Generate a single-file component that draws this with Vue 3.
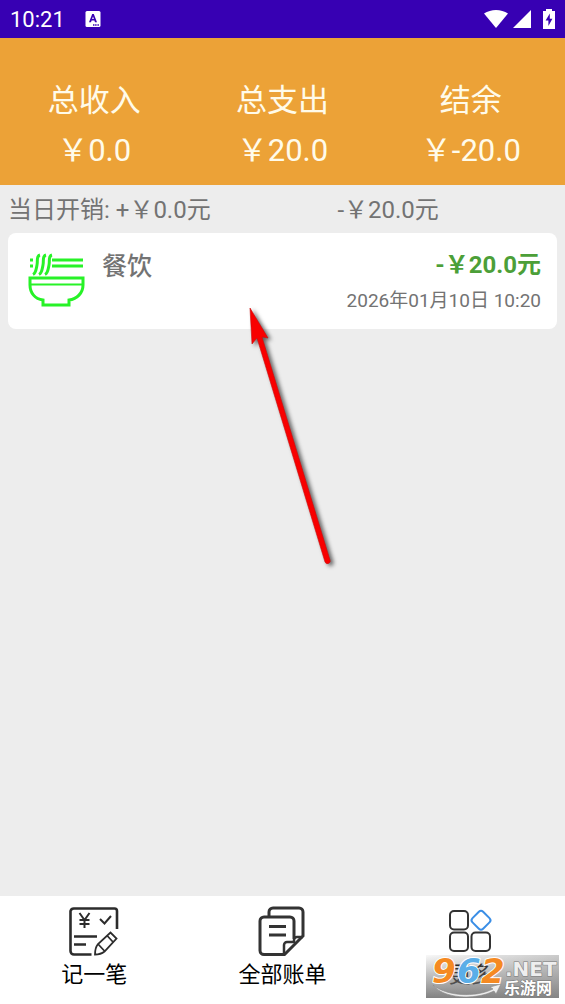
<script setup>
const yuan = '\uFFE5'

const totals = [
  { label: '总收入', value: `${yuan}0.0` },
  { label: '总支出', value: `${yuan}20.0` },
  { label: '结余', value: `${yuan}-20.0` },
]

const records = [
  { id: 1, category: '餐饮', amount: `-${yuan}20.0元`, time: '2026年01月10日 10:20' },
]
</script>

<template>
  <div class="app">
    <header class="status">
      <span class="clock">10:21</span>
      <svg class="badge-icon" width="16" height="18" viewBox="0 0 16 18" aria-hidden="true">
        <rect x="0.5" y="1" width="15" height="16" rx="1.5" fill="#fff" />
        <path d="M4 12.3 7.2 4h1.6L12 12.3h-2L9.4 10.6H6.6L6 12.3zM7.1 9h1.8L8 6.4z" fill="#3700b3" />
        <path d="M8 15h6" stroke="#3700b3" stroke-width="1.4" stroke-dasharray="1.2 .5" />
      </svg>
      <div class="signals">
        <svg width="26" height="20" viewBox="0 0 26 20" aria-hidden="true">
          <path d="M1 4.6C8-.2 18-.2 25 4.6L13 19z" fill="#fff" />
        </svg>
        <svg width="18" height="20" viewBox="0 0 18 20" aria-hidden="true">
          <path d="M0 19 18 1v18z" fill="#fff" />
        </svg>
        <svg class="battery" width="12" height="20" viewBox="0 0 12 20" aria-hidden="true">
          <path d="M3 0h6v2h3v18H0V2h3z" fill="#fff" />
          <path d="M6.8 4.5 2.6 11.4h2.8v5.6l4-7.2H6.8z" fill="#3700b3" />
        </svg>
      </div>
    </header>

    <section class="totals">
      <div v-for="t in totals" :key="t.label" class="total">
        <span>{{ t.label }}</span>
        <span>{{ t.value }}</span>
      </div>
    </section>

    <main class="content">
      <div class="day">
        <span>当日开销: +{{ yuan }}0.0元</span>
        <span>-{{ yuan }}20.0元</span>
      </div>

      <article v-for="r in records" :key="r.id" class="card">
        <svg class="food" width="60" height="60" viewBox="0 0 60 60" fill="none" stroke="#27f227" stroke-width="3" aria-hidden="true">
          <path d="M4 7h3M4 13h3M26 7h31M26 13h31" />
          <path d="M14 2c-4 1-2 5-3 10s-1 8-4 9.500M20 2c-4 1-2 5-3 10s-1 8-4 9.500M26 2c-4 1-2 5-3 10s-1 8-4 9.500" />
          <path d="M4 25h53v7c0 8-6 14-14 15v5H17v-5C9 46 4 40 4 32z" />
          <path d="M5 31.500h51" stroke-width="2" />
        </svg>
        <h2 class="category">{{ r.category }}</h2>
        <div class="detail">
          <strong class="amount">{{ r.amount }}</strong>
          <time class="time">{{ r.time }}</time>
        </div>
      </article>

      <svg class="arrow" width="100" height="270" viewBox="0 0 100 270" aria-hidden="true">
        <path d="M10 5 28 35l-6-1L90 257a2.500 2.500 0 0 1-5 2L17 35l-5 6z" fill="#f80000" stroke="#c90c0c" stroke-width="0.6" />
      </svg>
    </main>

    <nav class="tabs">
      <button type="button" class="tab">
        <svg width="52" height="52" viewBox="0 0 52 52" fill="none" stroke="#2c2c2c" aria-hidden="true">
          <path d="M23.500 49.500H6A3.500 3.500 0 0 1 2.500 46V6A3.500 3.500 0 0 1 6 3.500h40.500A2.500 2.500 0 0 1 49 6v18" stroke-width="2.600" />
          <path d="M11.500 8l5 7 5-7M16.500 15v8M11.500 15h10M11.500 19h10" stroke-width="2" />
          <path d="m32 14 4.500 4.500L43 11" stroke-width="2" />
          <path d="M6 31.500h23M6 39.500h12" stroke-width="2.400" />
          <path d="M27 49.500c0-5 1-8 3-10.500L42.500 27.500l6 6L36.500 46.500c-2.500 2-5 3-9.500 3zM30 39l6.500 7M39 30.500l6 6.500" stroke-width="1.800" />
        </svg>
        <span>记一笔</span>
      </button>
      <button type="button" class="tab">
        <svg width="52" height="52" viewBox="0 0 52 52" fill="none" stroke="#333" stroke-width="3" aria-hidden="true">
          <path d="M13 11V7a4 4 0 0 1 4-4h26a4 4 0 0 1 4 4v24L28.500 49.500H8A4 4 0 0 1 4 45.500V16a4 4 0 0 1 4-4h26a4 4 0 0 1 4 4v18" />
          <path d="M28 49V40a3 3 0 0 1 3-3h8M38 37v-2a3 3 0 0 1 3-3h6" stroke-width="2.500" />
          <path d="M13 21.500h17M13 30h17" />
        </svg>
        <span>全部账单</span>
      </button>
      <button type="button" class="tab">
        <svg width="52" height="52" viewBox="0 0 52 52" fill="none" stroke="#333" stroke-width="2" aria-hidden="true">
          <rect x="5" y="6" width="18" height="18.500" rx="4" />
          <rect x="5" y="27.500" width="18" height="18.500" rx="4" />
          <rect x="26.500" y="27.500" width="18.500" height="18.500" rx="4" />
          <rect x="28.500" y="7.750" width="15" height="15" rx="3" transform="rotate(45 36 15.250)" stroke="#3a8ee6" />
        </svg>
        <span>更多</span>
      </button>
    </nav>

    <svg class="mark" width="134" height="44" viewBox="0 0 134 44" role="img" aria-label="962.NET 乐游网">
      <defs>
        <linearGradient id="mark-shade" x1="0" y1="0" x2="0" y2="1">
          <stop offset="0" stop-color="#777" stop-opacity="0.05" />
          <stop offset="1" stop-color="#777" stop-opacity="0.92" />
        </linearGradient>
        <linearGradient id="mark-side" x1="0" y1="0" x2="1" y2="0">
          <stop offset="0" stop-color="#888" stop-opacity="0" />
          <stop offset="1" stop-color="#888" stop-opacity="0.4" />
        </linearGradient>
      </defs>
      <rect width="133" height="43" fill="url(#mark-shade)" />
      <rect width="133" height="43" fill="url(#mark-side)" />
      <path d="M7 30c13 11 42 13 60 4l-3-2 11-3-5 10-2-3C47 46 17 43 7 30z" fill="#eee" stroke="#888" stroke-width="0.6" />
      <g class="mark-digits">
        <text x="6" y="28" fill="#f58a22">9</text>
        <text x="31" y="28" fill="#5aaee8">6</text>
        <text x="55" y="28" fill="#f58a22">2</text>
      </g>
      <text x="79" y="21" class="mark-net">.NET</text>
      <text x="78" y="39" class="mark-name">乐游网</text>
    </svg>
  </div>
</template>

<style>
body {
  margin: 0;
}
</style>

<style scoped>
.app {
  position: relative;
  display: flex;
  flex-direction: column;
  min-height: 100vh;
  background: #ededed;
  color: #737373;
  font-family: Roboto, "Noto Sans CJK SC", sans-serif;
}

.status {
  display: flex;
  align-items: center;
  height: 38px;
  padding: 0 10px;
  background: #3700b3;
  color: #fff;
}

.clock {
  font-size: 22px;
}

.badge-icon {
  margin-left: 20px;
}

.signals {
  display: flex;
  align-items: center;
  gap: 4px;
  margin-left: auto;
}

.battery {
  margin-left: 8px;
}

.totals {
  display: grid;
  grid-template-columns: repeat(3, 1fr);
  padding: 38px 0 9px;
  background: #eca237;
  color: #fffbea;
  font-size: 31px;
  line-height: 50px;
}

.total {
  display: flex;
  flex-direction: column;
  align-items: center;
}

.content {
  position: relative;
  flex: 1;
  padding: 0 8px;
}

.day {
  display: grid;
  grid-template-columns: 3fr 2fr;
  padding-top: 2px;
  font-size: 24px;
  line-height: 46px;
}

.card {
  display: flex;
  align-items: flex-start;
  padding: 16px;
  border-radius: 8px;
  background: #fff;
}

.food {
  margin: 4px 0 0 2px;
}

.category {
  margin: 0 0 0 16px;
  font-size: 25px;
  font-weight: 500;
  line-height: 36px;
}

.detail {
  display: flex;
  flex-direction: column;
  align-items: flex-end;
  margin-left: auto;
}

.amount {
  color: #4c9f38;
  font-size: 24px;
  line-height: 32px;
}

.time {
  margin-top: 8px;
  font-size: 19px;
  line-height: 24px;
}

.arrow {
  position: absolute;
  top: 118px;
  left: 240px;
  filter: drop-shadow(3px 2px 2px rgba(0, 0, 0, 0.6));
}

.tabs {
  display: grid;
  grid-template-columns: repeat(3, 1fr);
  height: 108px;
  background: #fff;
}

.tab {
  display: flex;
  flex-direction: column;
  align-items: center;
  gap: 2px;
  padding: 9px 0 0;
  border: 0;
  background: none;
  color: #000;
  font-family: inherit;
  font-size: 22px;
  line-height: 32px;
}

.mark {
  position: absolute;
  right: 5px;
  bottom: 5px;
  overflow: visible;
}

.mark-digits {
  font-family: "DejaVu Sans", sans-serif;
  font-size: 34px;
  font-weight: 700;
  font-style: italic;
  stroke: #fff;
  stroke-width: 2px;
  paint-order: stroke;
}

.mark-net {
  fill: #eee;
  font-family: "DejaVu Sans", sans-serif;
  font-size: 20px;
  font-weight: 700;
  stroke: #777;
  stroke-width: 1px;
  paint-order: stroke;
}

.mark-name {
  fill: #fff;
  font-size: 16px;
  font-weight: 700;
  stroke: #777;
  stroke-width: 1px;
  paint-order: stroke;
}
</style>
